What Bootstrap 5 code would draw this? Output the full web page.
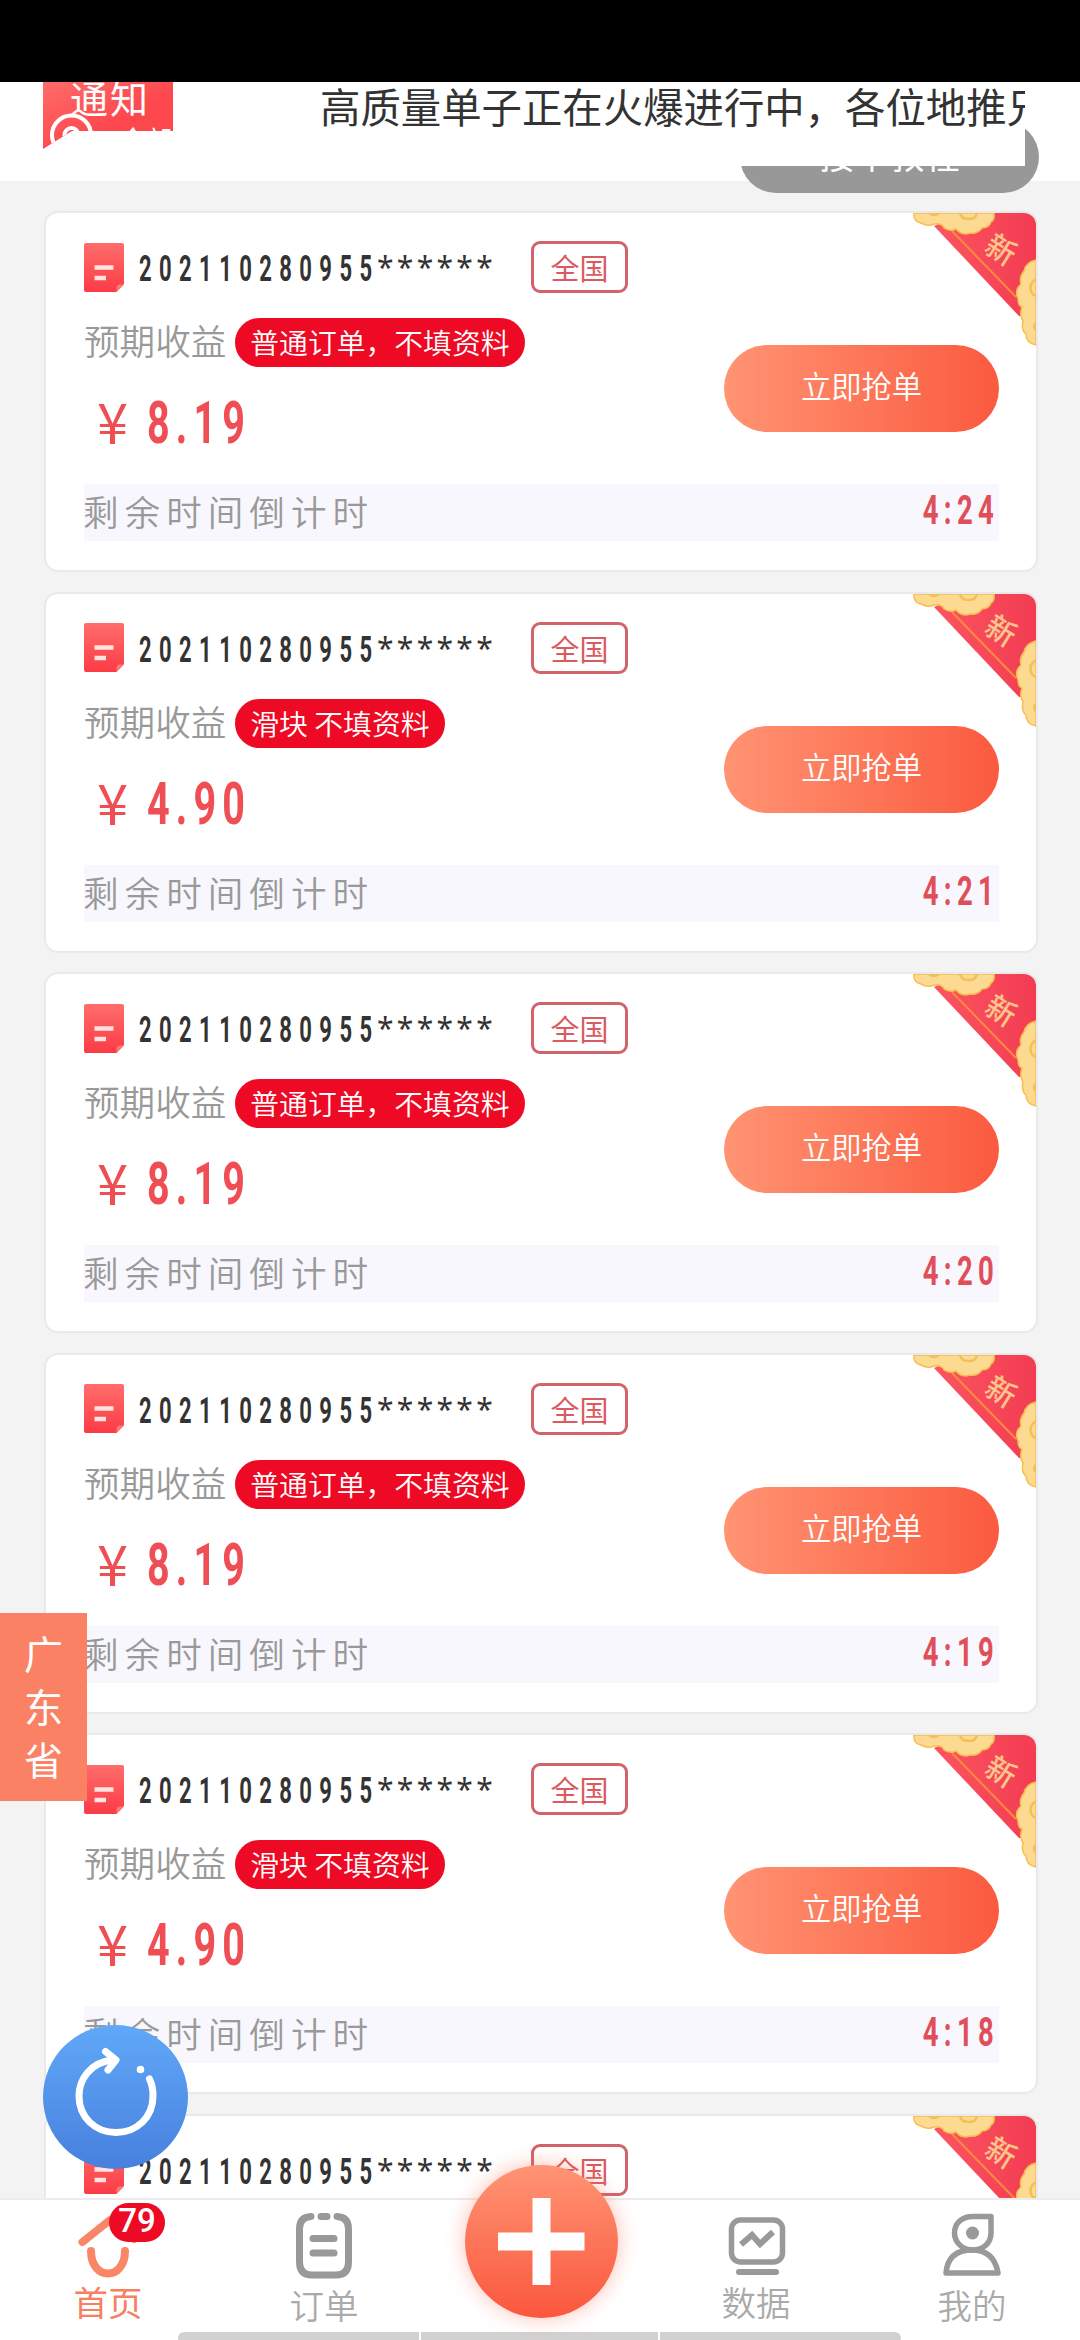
<!DOCTYPE html>
<html lang="zh-CN">
<head>
<meta charset="utf-8">
<meta name="viewport" content="width=device-width, initial-scale=1">
<title>首页</title>
<link rel="stylesheet" href="https://cdn.jsdelivr.net/npm/bootstrap@5.3.0/dist/css/bootstrap.min.css">
<style>
body{width:1080px;height:2340px;background:#f3f3f3;font-family:"Noto Sans CJK SC",sans-serif;color:#333}
.screen{height:2340px}
.statusbar{height:82px;background:#000}
.topbar{height:99px;background:#fff}
.notice-box{width:1025px;height:84px;background:#fff;z-index:3}
.notice-img{width:130px;height:68px;margin-left:43px}
.notice-text{margin-left:147px;font-size:40.4px;line-height:48px;height:60px;white-space:nowrap;color:#333}
.guide{left:740px;top:121px;width:299px;height:72px;background:#989898;color:#fff;font-size:35px;line-height:65px;z-index:2}
.orders{padding:30px 43px 0 44px}
.order{width:994px;height:361px;margin-bottom:19.5px;border:2px solid #e9e9e9;border-radius:14px;background:#fff;padding:28px 37px 0 38px;overflow:hidden}
.ribbon{right:0;top:0;width:124px;height:134px}
.narrow{font-family:Roboto,sans-serif;display:inline-block;transform-origin:0 50%;white-space:nowrap}
.no-row{height:52px}
.order-no{width:237px;margin-left:15px;font-size:36px;line-height:49px;height:52px;font-weight:700}
.order-no .narrow{transform:scaleX(.61);letter-spacing:12.2px}
.stars{width:141px;height:52px;font:400 30px/51px "Noto Sans";letter-spacing:3.3px;padding-left:1px;white-space:nowrap}
.area{width:97px;height:52px;border:3px solid #d1636a;border-radius:9px;color:#db5a60;font-size:29px;line-height:47px;text-align:center;margin-left:14px}
.income-row{margin-top:25px;height:49px}
.gray-label{color:#999;font-size:35.6px;line-height:43px;white-space:nowrap;font-weight:350}
.kind{height:49px;border-radius:25px;background:#ee0a24;color:#fff;font-size:28.8px;line-height:48px;padding:0 15px;margin-left:9px;white-space:nowrap;font-weight:350}
.price-row{margin-top:19px;height:72px;color:#ee4e54}
.yen{font-size:56px;line-height:68px;width:50px;margin-left:13px}
.price{font-size:59px;line-height:73px;font-weight:700;letter-spacing:9.2px;transform:scaleX(.67)}
.timer-row{margin-top:26px;height:57px;background:#f7f7fd}
.timer-row .gray-label{letter-spacing:6px;line-height:54px;margin-left:-1px}
.clock{font-size:41px;line-height:53px;font-weight:700;letter-spacing:8px;color:#e04f59;transform:scaleX(.67);transform-origin:100% 50%}
.grab{right:37px;top:132px;width:275px;height:87px;border:0;border-radius:44px;background:linear-gradient(90deg,#ff9473,#fb5a3f);color:#fff;font-size:30.3px;line-height:80px;padding:0 0 7px;font-weight:350}
.grab:hover{color:#fff}
.province{left:0;top:1613px;width:87px;height:188px;background:#fb8165;color:#fff;font-size:39px;line-height:53px;padding:13px 24px;z-index:4}
.refresh{left:43px;top:2025px;width:145px;height:144px;z-index:4}
.tabs{left:0;top:2198px;width:1080px;height:142px;background:#fff;border-top:2px solid #ececec;z-index:3}
.tab{width:216px;color:#aaa;font-size:34.5px;line-height:43px;text-align:center;font-weight:350}
.tab svg{width:72px;height:72px;display:block;margin:8px auto 0}
.tab.on{color:#f6805f;font-weight:400}
.tab .low{padding-top:3px}
.num{left:109px;top:3px;width:56px;height:39px;border-radius:20px;background:#ee0a24;color:#fff;font:500 33px/36px Roboto;text-align:center;z-index:5}
.fab{left:465px;top:2165px;width:153px;height:153px;border-radius:50%;background:linear-gradient(#ff9474,#fb573d);box-shadow:0 0 20px rgba(252,100,75,.42);z-index:6}
.scrollbar-strip{left:178px;top:2332px;width:723px;height:12px;gap:2px;z-index:5;border-radius:8px;overflow:hidden}
.scrollbar-strip div{background:#d2d1d2;height:12px}
</style>
</head>
<body>
<svg width="0" height="0" class="position-absolute">
<defs>
<linearGradient id="gDoc" x1="0" y1="0" x2="0" y2="1"><stop offset="0" stop-color="#ff6d6a"/><stop offset="1" stop-color="#fb3b46"/></linearGradient>
<linearGradient id="gRib" x1="0" y1="0" x2="1" y2="0"><stop offset="0" stop-color="#fb5560"/><stop offset="1" stop-color="#f33c52"/></linearGradient>
<symbol id="doc" viewBox="0 0 40 49"><path d="M2 0H38Q40 0 40 2V41L32.500 49H2Q0 49 0 47V2Q0 0 2 0Z" fill="url(#gDoc)"/><path d="M32.500 49V44Q33 42 35 41.500H40Z" fill="#ff7774"/><path d="M10.500 24.500H29.500M10.500 35H22" stroke="#ffe3e1" stroke-width="4.500"/></symbol>
<symbol id="ribbon" viewBox="0 0 124 134">
<path d="M22 13L50 0H124V103H107Z" fill="url(#gRib)"/>
<path d="M40 18L104 84" stroke="#fb8a3c" stroke-width="2"/>
<path d="M2 0Q1 8 9 10Q16 14 22 11Q30 10 32 15Q38 19 44 16Q50 23 58 20Q66 21 70 15Q77 15 79 9Q83 7 82 0Z" fill="#fdda91" stroke="#f8bd50" stroke-width="1.500"/>
<path d="M124 47Q114 49 112 58Q107 64 109 71Q102 77 106 86Q106 93 110 94Q107 102 111 108Q109 117 114 121Q114 130 124 132Z" fill="#fdda91" stroke="#f8bd50" stroke-width="1.500"/>
<path d="M17 0Q22 4 27 0M48 0Q49 6 57 6Q64 6 65 0M124 66Q117 70 119 78Q120 82 124 83M124 110Q120 113 124 117" fill="none" stroke="#f3bf59" stroke-width="2.500"/>
<text x="0" y="0" transform="translate(90 35) rotate(32)" font-family="Noto Sans CJK SC" font-size="30" font-weight="500" fill="#fdc58c" text-anchor="middle" dominant-baseline="central">新</text>
</symbol>
</defs>
</svg>
<div class="screen position-relative overflow-hidden">
  <div class="statusbar"></div>
  <header class="topbar">
    <div class="notice-box d-flex position-relative overflow-hidden">
      <svg class="notice-img flex-shrink-0" viewBox="0 0 130 68">
        <defs><linearGradient id="gN" x1="0" y1="0" x2="1" y2="1"><stop offset="0" stop-color="#ff6c69"/><stop offset=".6" stop-color="#fc474d"/></linearGradient>
        <clipPath id="cN"><path d="M0 0H130V49H29L0 67Z"/></clipPath></defs>
        <g clip-path="url(#cN)">
          <rect width="130" height="68" fill="url(#gN)"/>
          <text x="27" y="31" font-size="38" letter-spacing="2" fill="#fff">通知</text>
          <g fill="none" stroke="#fff" stroke-width="4"><circle cx="28.500" cy="53" r="19.500"/><circle cx="28.500" cy="53" r="7"/></g>
          <text x="77" y="68" font-size="26" fill="#fff">全部</text>
        </g>
      </svg>
      <div class="notice-text">高质量单子正在火爆进行中，各位地推兄</div>
    </div>
  </header>
  <div class="guide position-absolute rounded-pill text-center">接单教程</div>
  <main class="orders" id="orders"></main>

  <div class="province position-absolute">广东省</div>
  <svg class="refresh position-absolute" viewBox="0 0 145 144">
    <defs><linearGradient id="gB" x1="0" y1="0" x2="0" y2="1"><stop offset="0" stop-color="#61a8f8"/><stop offset="1" stop-color="#4780de"/></linearGradient></defs>
    <ellipse cx="72.500" cy="72" rx="72.500" ry="72" fill="url(#gB)"/>
    <g fill="none" stroke="#fff" stroke-width="7" stroke-linecap="round" stroke-linejoin="round">
      <path d="M70 35C47 37 36 55 36 71C36 92 52 107.500 73 107.500C94 107.500 110 92 110 71Q110 61 106.500 54"/>
      <path d="M62.500 26.500L73 35L65 45"/>
    </g><circle cx="97.500" cy="44.500" r="3.800" fill="#fff"/>
  </svg>

  <nav class="tabs position-absolute d-flex">
    <div class="tab on position-relative">
      <svg viewBox="0 0 72 72"><g fill="none" stroke="#fa8668" stroke-width="8" stroke-linecap="round" stroke-linejoin="round"><path d="M10.500 34L38 12L62 31"/><path d="M19 43C19 73 53 73 53 43"/></g></svg>
      首页<span class="num position-absolute">79</span>
    </div>
    <div class="tab"><svg viewBox="0 0 72 72"><g fill="none" stroke="#999" stroke-width="7" stroke-linecap="round"><path d="M23 8.500Q11.500 9 11.500 21V54Q11.500 67 24 67H48Q60.500 67 60.500 54V21Q60.500 9 49 8.500"/><path d="M33 8.500H39M25 30.500H46M25 45H46"/></g></svg><div class="low">订单</div></div>
    <div class="tab"></div>
    <div class="tab"><svg viewBox="0 0 72 72"><rect x="11.500" y="12" width="51" height="42" rx="9" fill="none" stroke="#999" stroke-width="5.500"/><path d="M21 36.500L32 27L40 36L53 24" fill="none" stroke="#999" stroke-width="6"/><path d="M19 64H56" stroke="#999" stroke-width="6" stroke-linecap="round"/></svg>数据</div>
    <div class="tab"><svg viewBox="0 0 72 72"><g fill="none" stroke="#999" stroke-width="5.500" stroke-linejoin="round"><path d="M55 8.500V25C55 36 46 42 37 42C26 42 18.500 34 18.500 25C18.500 15 26 8.500 37 8.500Z"/><path d="M10 65Q12 42 36 42Q58 42 62 65Z"/></g><circle cx="36.500" cy="25" r="6.500" fill="#999"/></svg><div class="low">我的</div></div>
  </nav>
  <div class="fab position-absolute"><svg width="153" height="153" viewBox="0 0 153 153"><path d="M33 76.500H119.500M76.500 33V120" stroke="#fff" stroke-width="18"/></svg></div>
  <div class="scrollbar-strip position-absolute d-flex"><div style="width:241px"></div><div style="width:237px"></div><div class="flex-fill"></div></div>
</div>
<script>
const normal = '普通订单，不填资料', slider = '滑块 不填资料';
const orders = [
  [normal, '8.19', '4:24'], [slider, '4.90', '4:21'], [normal, '8.19', '4:20'],
  [normal, '8.19', '4:19'], [slider, '4.90', '4:18'], [normal, '8.19', '4:17']
];
document.getElementById('orders').innerHTML = orders.map(([kind, price, left]) => `
<article class="order position-relative">
  <svg class="ribbon position-absolute"><use href="#ribbon"/></svg>
  <div class="no-row d-flex align-items-center">
    <svg width="40" height="49" class="flex-shrink-0"><use href="#doc"/></svg>
    <div class="order-no"><span class="narrow">202110280955</span></div>
    <div class="stars">******</div>
    <div class="area">全国</div>
  </div>
  <div class="income-row d-flex">
    <div class="gray-label">预期收益</div><div class="kind">${kind}</div>
  </div>
  <div class="price-row d-flex"><div class="yen">¥</div><div><span class="narrow price">${price}</span></div></div>
  <div class="timer-row d-flex justify-content-between">
    <div class="gray-label">剩余时间倒计时</div><div class="narrow clock">${left}</div>
  </div>
  <button class="btn grab position-absolute">立即抢单</button>
</article>`).join('');
</script>
<script src="https://cdn.jsdelivr.net/npm/bootstrap@5.3.0/dist/js/bootstrap.bundle.min.js"></script>
</body>
</html>
